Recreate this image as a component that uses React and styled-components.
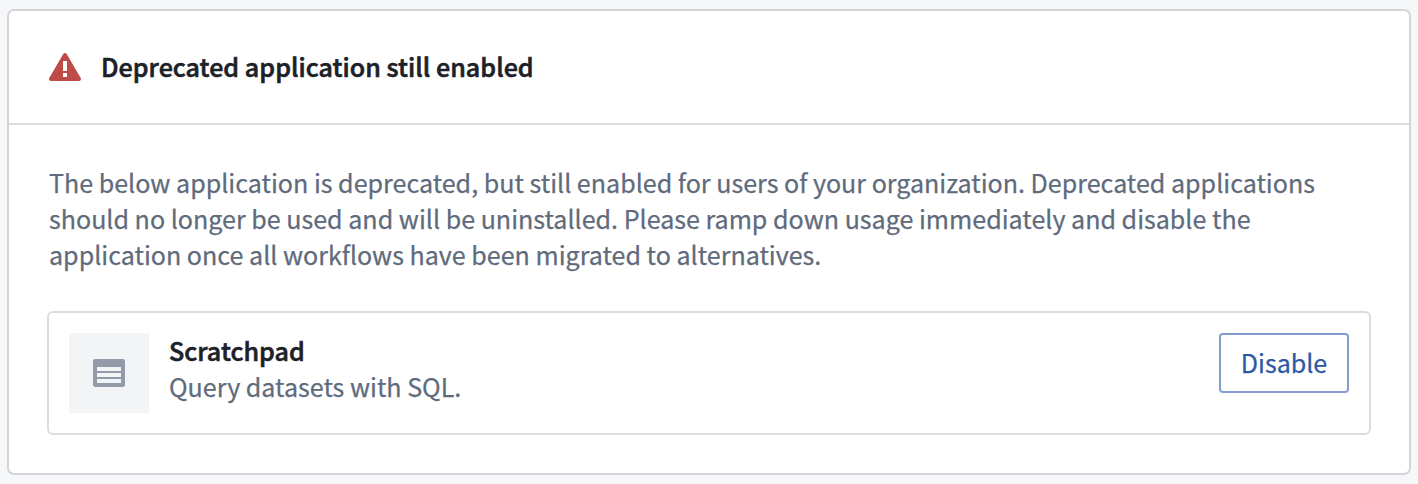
import React from "react";
import styled, { createGlobalStyle } from "styled-components";

const GlobalStyle = createGlobalStyle`
  *, *::before, *::after { box-sizing: border-box; }
  body {
    margin: 0;
    background: #f5f7f9;
    color: #5f6b7c;
    font-family: "Noto Sans CJK JP", "Noto Sans", sans-serif;
    font-size: 25.07px;
    line-height: 36px;
    -webkit-text-stroke: 0.25px currentColor;
  }
`;

const Page = styled.main`
  height: 484px;
  padding: 9px 7px;
`;

const Card = styled.section`
  height: 466px;
  background: #fff;
  border: 2px solid #d3d5d9;
  border-radius: 7px;
`;

const CardHeader = styled.header`
  display: flex;
  align-items: center;
  gap: 20px;
  height: 114px;
  padding: 0 40px;
  border-bottom: 2px solid #dcdcdd;
`;

const Title = styled.h2`
  margin: 0;
  color: #1c2127;
  font-size: inherit;
  font-weight: 500;
  letter-spacing: 0.04px;
  -webkit-text-stroke: 0.6px currentColor;
`;

const CardTitle = styled(Title)`
  padding-bottom: 2px;
`;

const CardBody = styled.div`
  padding: 39px 38px 0;
`;

const Message = styled.p`
  width: 1300px;
  margin: 0 0 39px;
  padding-left: 2px;
`;

const AppRow = styled.article`
  display: flex;
  align-items: flex-start;
  height: 124px;
  padding: 20px;
  border: 2px solid #dcdcdd;
  border-radius: 6px;
`;

const IconTile = styled.div`
  display: grid;
  place-items: center;
  width: 80px;
  height: 80px;
  margin-right: 20px;
  background: #f3f4f6;
`;

const Details = styled.div`
  flex: 1;
  margin-top: -1px;
`;

const Description = styled.p`
  margin: 0;
`;

const DisableButton = styled.button`
  width: 130px;
  height: 60px;
  padding: 0 0 2px;
  background: #fff;
  border: 2px solid #849dd1;
  border-radius: 4px;
  color: #2d58a7;
  font: inherit;
  -webkit-text-stroke: inherit;
  -webkit-text-stroke-color: currentColor;
`;

const Icon = styled.svg`
  display: block;
  flex: none;
  fill: ${(p) => p.$color};
`;

const WarningIcon = () => (
  <Icon $color="#bf4b49" width="32" height="32" viewBox="0 0 16 16" aria-hidden="true">
    <path
      fillRule="evenodd"
      d="M15.84 13.5l.01-.01-7-12-.01.01c-.17-.3-.48-.5-.85-.5s-.67.2-.85.5l-.01-.01-7 12 .01.01c-.09.15-.15.31-.15.5 0 .55.45 1 1 1h14c.55 0 1-.45 1-1 0-.19-.06-.35-.15-.5zM9 13H7v-2h2v2zm0-3H7V5h2v5z"
    />
  </Icon>
);

const ApplicationIcon = () => (
  <Icon $color="#939bab" width="32" height="32" viewBox="0 0 16 16" aria-hidden="true">
    <path
      fillRule="evenodd"
      d="M15 1H1c-.55 0-1 .45-1 1v12c0 .55.45 1 1 1h14c.55 0 1-.45 1-1V2c0-.55-.45-1-1-1zM14 13H2v-2h12zM14 10H2V8h12zM14 7H2V5h12z"
    />
  </Icon>
);

export default function App() {
  return (
    <>
      <GlobalStyle />
      <Page>
        <Card>
          <CardHeader>
            <WarningIcon />
            <CardTitle>Deprecated application still enabled</CardTitle>
          </CardHeader>
          <CardBody>
            <Message>
              The below application is deprecated, but still enabled for users of your
              organization. Deprecated applications should no longer be used and will be
              uninstalled. Please ramp down usage immediately and disable the application once
              all workflows have been migrated to alternatives.
            </Message>
            <AppRow>
              <IconTile>
                <ApplicationIcon />
              </IconTile>
              <Details>
                <Title as="h3">Scratchpad</Title>
                <Description>Query datasets with SQL.</Description>
              </Details>
              <DisableButton type="button">Disable</DisableButton>
            </AppRow>
          </CardBody>
        </Card>
      </Page>
    </>
  );
}
